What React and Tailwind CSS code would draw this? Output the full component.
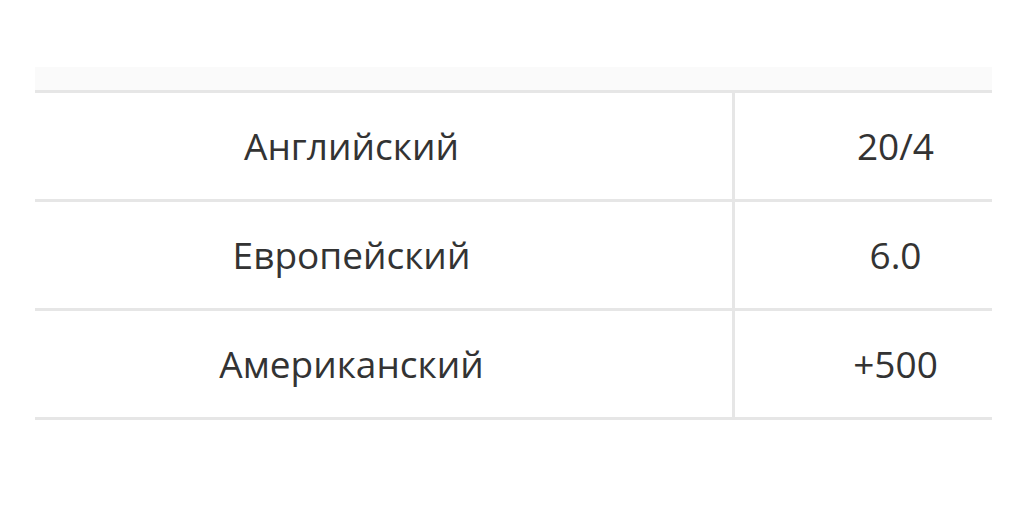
export default function App() {
  const rows = [
    ["Английский", "20/4"],
    ["Европейский", "6.0"],
    ["Американский", "+500"],
  ];
  return (
    <div className="w-[1024px] h-[507px] bg-white pt-[67px] pl-[35px]" style={{ fontFamily: '"Open Sans", sans-serif' }}>
      <div className="w-[957px]">
        <div className="h-[23px] bg-[#fafafa]" />
        <div className="border-b-[3px] border-[#e6e6e6]">
          {rows.map(([a, b]) => (
            <div key={a} className="flex border-t-[3px] border-[#e6e6e6] h-[109px]">
              <div className="w-[700px] border-r-[3px] border-[#e6e6e6] flex items-center justify-center pr-[64px] text-[37px] text-[#333333]">
                {a}
              </div>
              <div className="flex-1 flex items-center justify-center pl-[64px] text-[37px] text-[#333333]">
                {b}
              </div>
            </div>
          ))}
        </div>
      </div>
    </div>
  );
}
